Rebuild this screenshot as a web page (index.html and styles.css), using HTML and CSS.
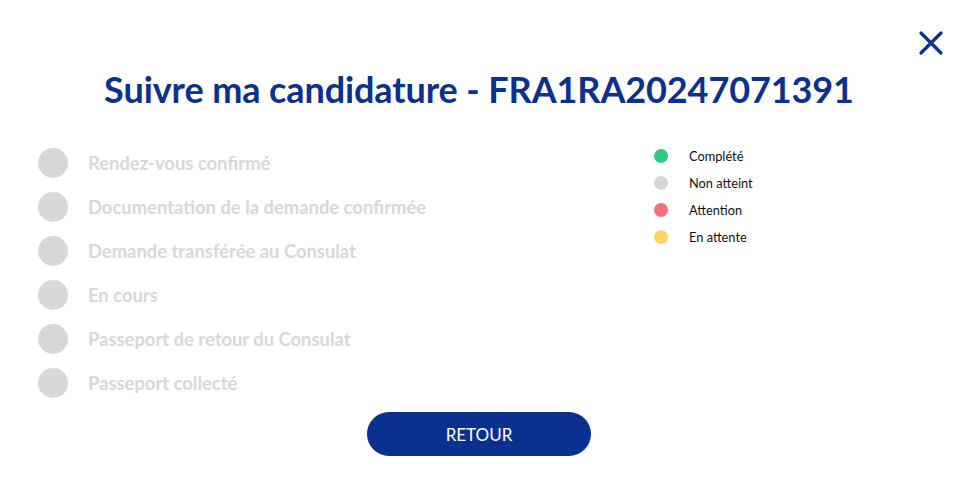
FILE: index.html
```html
<!DOCTYPE html>
<html lang="fr">
<head>
<meta charset="utf-8">
<link rel="stylesheet" href="styles.css">
</head>
<body>
<div class="modal">
  <button class="close" aria-label="Fermer">
    <svg width="26" height="26" viewBox="0 0 26 26"><path d="M3 3 L23 23 M23 3 L3 23" stroke="#0b318f" stroke-width="3.2" stroke-linecap="round"/></svg>
  </button>
  <h1 class="title">Suivre ma candidature - FRA1RA20247071391</h1>
  <div class="body">
    <ul class="steps">
      <li class="step"><span class="dot"></span><span>Rendez-vous confirmé</span></li>
      <li class="step"><span class="dot"></span><span>Documentation de la demande confirmée</span></li>
      <li class="step"><span class="dot"></span><span>Demande transférée au Consulat</span></li>
      <li class="step"><span class="dot"></span><span>En cours</span></li>
      <li class="step"><span class="dot"></span><span>Passeport de retour du Consulat</span></li>
      <li class="step"><span class="dot"></span><span>Passeport collecté</span></li>
    </ul>
    <ul class="legend">
      <li><span class="ldot green"></span>Complété</li>
      <li><span class="ldot grey"></span>Non atteint</li>
      <li><span class="ldot red"></span>Attention</li>
      <li><span class="ldot yellow"></span>En attente</li>
    </ul>
  </div>
  <div class="actions"><button class="btn">RETOUR</button></div>
</div>
</body>
</html>
```
FILE: styles.css
```css
* { box-sizing: border-box; }
html, body { margin: 0; padding: 0; background: #fff; }
body { font-family: Lato, "Open Sans", sans-serif; width: 978px; height: 493px; overflow: hidden; }
.modal { position: relative; padding-top: 63px; padding-right: 20px; }
.close { position: absolute; top: 30px; right: 34px; background: none; border: 0; padding: 0; cursor: pointer; display: block; }
.close svg { display: block; }
.title { margin: 0; text-align: center; color: #0b318f; font-size: 36px; font-weight: 700; line-height: 52px; letter-spacing: -0.1px; }
.body { display: flex; margin-top: 33px; padding-left: 38px; }
.steps { list-style: none; margin: 0; padding: 0; width: 616px; display: flex; flex-direction: column; gap: 14px; }
.step { display: flex; align-items: center; gap: 20px; height: 30px; color: #d8d8d8; font-weight: 700; font-size: 18.4px; }
.dot { width: 30px; height: 30px; border-radius: 50%; background: #d8d8d8; flex: none; }
.legend { list-style: none; margin: 1px 0 0; padding: 0; display: flex; flex-direction: column; gap: 13px; }
.legend li { display: flex; align-items: center; gap: 21px; height: 14px; font-size: 12.8px; color: #111; }
.ldot { width: 14px; height: 14px; border-radius: 50%; flex: none; }
.green { background: #2ecc80; }
.grey { background: #d6d6d6; }
.red { background: #f5707f; }
.yellow { background: #fdd464; }
.actions { display: flex; justify-content: center; margin-top: 14px; }
.btn { width: 224px; height: 44px; border: 0; border-radius: 22px; background: #0a3090; color: #fff; font-family: Lato, "Open Sans", sans-serif; font-size: 17px; cursor: pointer; }
```
